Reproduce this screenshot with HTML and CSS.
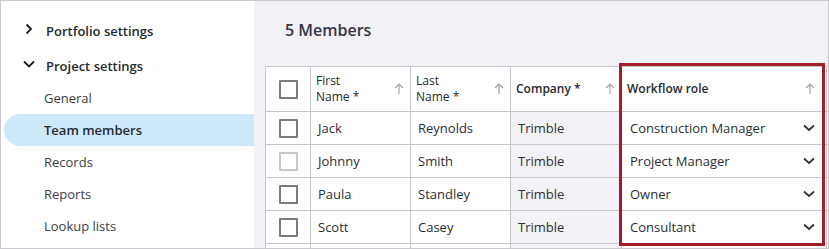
FILE: index.html
```html
<!DOCTYPE html>
<html lang="en">
<head>
<meta charset="utf-8">
<title>Team members</title>
<link rel="stylesheet" href="styles.css">
</head>
<body>
<div class="frame">
  <nav class="sidebar">
    <div class="group">
      <span class="chev"><svg width="14" height="14" viewBox="0 0 14 14"><path d="M4.5 2.5 L9 7 L4.5 11.5" fill="none" stroke="#1b1b1f" stroke-width="1.8"/></svg></span>
      <span>Portfolio settings</span>
    </div>
    <div class="group open">
      <span class="chev"><svg width="14" height="14" viewBox="0 0 14 14"><path d="M2 4.5 L7 9.5 L12 4.5" fill="none" stroke="#1b1b1f" stroke-width="1.8"/></svg></span>
      <span>Project settings</span>
    </div>
    <div class="item">General</div>
    <div class="item active">Team members</div>
    <div class="item">Records</div>
    <div class="item">Reports</div>
    <div class="item">Lookup lists</div>
  </nav>
  <main class="main">
    <h1 class="title">5 Members</h1>
    <div class="grid">
      <div class="row head">
        <div class="cell check"><span class="box"></span></div>
        <div class="cell hcell"><span class="htext">First<br>Name *</span><span class="sort"><svg width="10" height="12" viewBox="0 0 10 12"><path d="M5 1 V11 M1 5 L5 1 L9 5" fill="none" stroke="#a2a2aa" stroke-width="1.2"/></svg></span></div>
        <div class="cell hcell"><span class="htext">Last<br>Name *</span><span class="sort"><svg width="10" height="12" viewBox="0 0 10 12"><path d="M5 1 V11 M1 5 L5 1 L9 5" fill="none" stroke="#a2a2aa" stroke-width="1.2"/></svg></span></div>
        <div class="cell hcell"><span class="htext strong">Company *</span><span class="sort"><svg width="10" height="12" viewBox="0 0 10 12"><path d="M5 1 V11 M1 5 L5 1 L9 5" fill="none" stroke="#a2a2aa" stroke-width="1.2"/></svg></span></div>
        <div class="cell hcell"><span class="htext strong">Workflow role</span><span class="sort wide"><svg width="10" height="12" viewBox="0 0 10 12"><path d="M5 1 V11 M1 5 L5 1 L9 5" fill="none" stroke="#a2a2aa" stroke-width="1.2"/></svg></span></div>
        <div class="cell hcell"></div>
      </div>
      <div class="row">
        <div class="cell check"><span class="box"></span></div>
        <div class="cell">Jack</div>
        <div class="cell">Reynolds</div>
        <div class="cell ro">Trimble</div>
        <div class="cell sel"><span>Construction Manager</span><svg class="dd" width="12" height="8" viewBox="0 0 12 8"><path d="M1 1.5 L6 6 L11 1.5" fill="none" stroke="#2e3035" stroke-width="1.7"/></svg></div>
        <div class="cell"></div>
      </div>
      <div class="row">
        <div class="cell check"><span class="box off"></span></div>
        <div class="cell">Johnny</div>
        <div class="cell">Smith</div>
        <div class="cell ro">Trimble</div>
        <div class="cell sel"><span>Project Manager</span><svg class="dd" width="12" height="8" viewBox="0 0 12 8"><path d="M1 1.5 L6 6 L11 1.5" fill="none" stroke="#2e3035" stroke-width="1.7"/></svg></div>
        <div class="cell"></div>
      </div>
      <div class="row">
        <div class="cell check"><span class="box"></span></div>
        <div class="cell">Paula</div>
        <div class="cell">Standley</div>
        <div class="cell ro">Trimble</div>
        <div class="cell sel"><span>Owner</span><svg class="dd" width="12" height="8" viewBox="0 0 12 8"><path d="M1 1.5 L6 6 L11 1.5" fill="none" stroke="#2e3035" stroke-width="1.7"/></svg></div>
        <div class="cell"></div>
      </div>
      <div class="row">
        <div class="cell check"><span class="box"></span></div>
        <div class="cell">Scott</div>
        <div class="cell">Casey</div>
        <div class="cell ro">Trimble</div>
        <div class="cell sel"><span>Consultant</span><svg class="dd" width="12" height="8" viewBox="0 0 12 8"><path d="M1 1.5 L6 6 L11 1.5" fill="none" stroke="#2e3035" stroke-width="1.7"/></svg></div>
        <div class="cell"></div>
      </div>
      <div class="row">
        <div class="cell check"></div>
        <div class="cell"></div>
        <div class="cell"></div>
        <div class="cell ro"></div>
        <div class="cell sel"></div>
        <div class="cell"></div>
      </div>
    </div>
    <div class="focus"></div>
  </main>
</div>
</body>
</html>
```
FILE: styles.css
```css
* { box-sizing: border-box; }
html, body { margin: 0; padding: 0; }
body {
  font-family: "Open Sans", "Noto Sans", sans-serif;
  color: #252a2e;
  background: #fff;
}
.frame {
  width: 829px;
  height: 249px;
  border: 1px solid #c9c9cf;
  display: flex;
  overflow: hidden;
}
.sidebar {
  width: 253px;
  flex: none;
  background: #fff;
  padding-top: 14px;
}
.group {
  height: 32px;
  display: flex;
  align-items: center;
  padding-left: 21px;
  font-size: 13px;
  font-weight: 600;
  color: #252a2e;
}
.group.open { height: 33px; margin-top: 2px; }
.chev {
  width: 14px;
  height: 14px;
  margin-right: 10px;
  display: flex;
  position: relative;
  top: -2px;
}
.item {
  height: 32px;
  line-height: 32px;
  margin-left: 3px;
  padding-left: 40px;
  font-size: 13px;
  color: #3d3d47;
}
.item.active {
  background: #cde8f9;
  border-radius: 16px 0 0 16px;
  font-weight: 600;
  color: #252a2e;
}
.main {
  flex: 1;
  background: #f1f1f6;
  position: relative;
  overflow: hidden;
  padding-left: 11px;
}
.title {
  margin: 0;
  height: 58px;
  line-height: 58px;
  padding-left: 20px;
  font-size: 16px;
  font-weight: 600;
  color: #363545;
  margin-bottom: 7px;
}
.grid {
  width: 720px;
  border-top: 1px solid #c6c6ce;
  border-left: 1px solid #c6c6ce;
}
.row {
  display: grid;
  grid-template-columns: 45px 100px 100px 111px 205px 150px;
  height: 33px;
}
.row.head { height: 45px; }
.cell {
  border-right: 1px solid #c6c6ce;
  border-bottom: 1px solid #c6c6ce;
  background: #fff;
  display: flex;
  align-items: center;
  padding-left: 7px;
  font-size: 13px;
  color: #2b2f33;
  white-space: nowrap;
  overflow: hidden;
}
.cell.check { justify-content: center; padding-left: 0; }
.box {
  width: 19px;
  height: 19px;
  border: 2px solid #7b7b82;
  border-radius: 1px;
  background: #fff;
}
.box.off { border-color: #c6c6cb; }
.hcell { padding-left: 5px; padding-right: 6px; justify-content: space-between; }
.htext {
  font-size: 12px;
  line-height: 16px;
  font-weight: 500;
  color: #252a2e;
}
.htext.strong { font-weight: 600; }
.sort { display: flex; width: 10px; }
.sort.wide { margin-right: 5px; }
.cell.ro { background: #f3f3f7; }
.cell.sel { padding-left: 8px; padding-right: 11px; justify-content: space-between; }
.dd { flex: none; }
.focus {
  position: absolute;
  left: 365px;
  top: 62px;
  width: 206px;
  height: 183px;
  border: 3px solid #a51e27;
  pointer-events: none;
}
```
